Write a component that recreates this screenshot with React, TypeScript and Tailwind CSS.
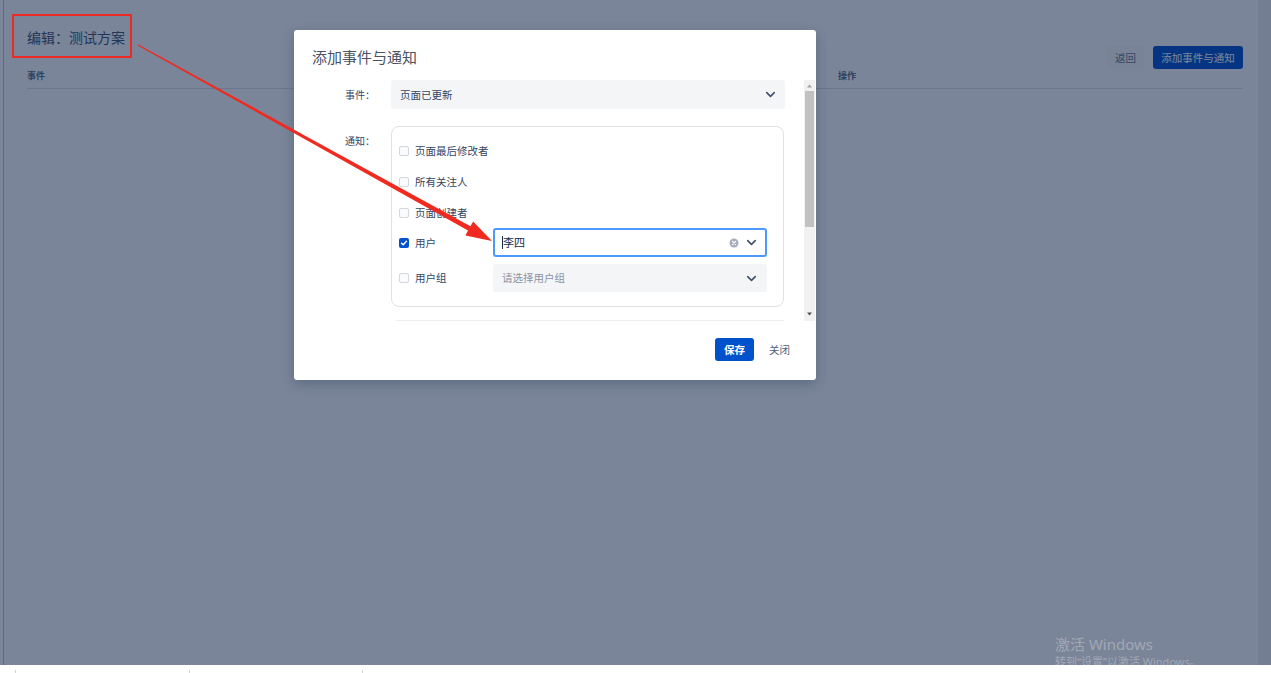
import { ChevronDown } from "lucide-react";

function Checkbox({ checked }: { checked?: boolean }) {
  if (checked) {
    return (
      <span className="flex h-[10px] w-[10px] items-center justify-center rounded-[2px] bg-[#0052cc]">
        <svg width="8" height="8" viewBox="0 0 8 8">
          <path d="M1.5 4.2 3.2 5.8 6.5 2.3" fill="none" stroke="white" strokeWidth="1.4" strokeLinecap="round" strokeLinejoin="round" />
        </svg>
      </span>
    );
  }
  return <span className="h-[10px] w-[10px] rounded-[2px] border border-[#d3d7de] bg-[#fafbfc]" />;
}

function NotifyOption({ label, checked, h }: { label: string; checked?: boolean; h: string }) {
  return (
    <div className={`flex items-center gap-[6px] ${h}`}>
      <Checkbox checked={checked} />
      <span className="text-[10.5px] text-[#344563]">{label}</span>
    </div>
  );
}

function Modal() {
  return (
    <div className="absolute left-[294px] top-[30px] flex h-[350px] w-[522px] flex-col rounded-[3px] bg-white shadow-[0_4px_12px_rgba(9,30,66,0.25)]">
      <div className="h-[50px] px-[18px] pt-[17px]">
        <h2 className="text-[15px] leading-[20px] text-[#4a5264]">添加事件与通知</h2>
      </div>

      <div className="flex h-[241px] overflow-hidden">
        <div className="flex flex-1 flex-col">
          <div className="flex h-[29px] items-center">
            <label className="w-[97px] pr-[16px] text-right text-[10px] text-[#344563]">事件：</label>
            <div className="flex h-[29px] w-[394px] items-center justify-between rounded-[3px] bg-[#f4f5f7] pl-[9px] pr-[7px]">
              <span className="text-[10.5px] text-[#344563]">页面已更新</span>
              <ChevronDown size={15} strokeWidth={2.6} className="text-[#42526e]" />
            </div>
          </div>

          <div className="mt-[17px] flex items-start">
            <label className="w-[97px] pr-[16px] pt-[8px] text-right text-[10px] leading-[14px] text-[#344563]">通知：</label>
            <div className="w-[393px] rounded-[8px] border border-[#dfe1e6] pb-[14px] pl-[7px] pr-[16px] pt-[8px]">
              <NotifyOption label="页面最后修改者" h="h-[31px]" />
              <NotifyOption label="所有关注人" h="h-[32px]" />
              <NotifyOption label="页面创建者" h="h-[30px]" />
              <div className="flex h-[29px] items-center">
                <div className="w-[94px]">
                  <NotifyOption label="用户" checked h="h-[29px]" />
                </div>
                <div className="flex h-[29px] flex-1 items-center justify-between rounded-[3px] border-2 border-[#4c9aff] pl-[7px] pr-[6px]">
                  <div className="flex items-center">
                    <span className="h-[13px] w-[1px] bg-[#172b4d]" />
                    <span className="text-[11px] text-[#172b4d]">李四</span>
                  </div>
                  <div className="flex items-center gap-[5px]">
                    <svg width="10" height="10" viewBox="0 0 10 10">
                      <circle cx="5" cy="5" r="4.5" fill="#a5adba" />
                      <path d="M3.4 3.4 6.6 6.6M6.6 3.4 3.4 6.6" stroke="white" strokeWidth="1.3" strokeLinecap="round" />
                    </svg>
                    <ChevronDown size={15} strokeWidth={2.6} className="text-[#42526e]" />
                  </div>
                </div>
              </div>
              <div className="mt-[7px] flex h-[28px] items-center">
                <div className="w-[94px]">
                  <NotifyOption label="用户组" h="h-[28px]" />
                </div>
                <div className="flex h-[28px] flex-1 items-center justify-between rounded-[3px] bg-[#f4f5f7] pl-[9px] pr-[8px]">
                  <span className="text-[10.5px] text-[#8993a4]">请选择用户组</span>
                  <ChevronDown size={15} strokeWidth={2.6} className="text-[#42526e]" />
                </div>
              </div>
            </div>
          </div>

          <div className="ml-[101px] mt-[13px] h-[20px] w-[390px] rounded-t-[8px] border border-[#ebecf0]" />
        </div>

        <div className="mr-[1px] flex w-[11px] flex-col items-center bg-[#f1f1f1]">
          <svg width="7" height="10" viewBox="0 0 7 10" className="mt-[1px]">
            <path d="M1 6.5 3.5 3.5 6 6.5Z" fill="#a3a3a3" />
          </svg>
          <div className="h-[136px] w-[9px] bg-[#c1c1c1]" />
          <div className="flex-1" />
          <svg width="7" height="10" viewBox="0 0 7 10" className="mb-[2px]">
            <path d="M1 3.5 3.5 6.5 6 3.5Z" fill="#505050" />
          </svg>
        </div>
      </div>

      <div className="flex flex-1 items-start justify-end gap-[7px] pr-[18px] pt-[17px]">
        <button className="h-[23px] w-[39px] rounded-[3px] bg-[#0052cc] text-[10.5px] font-bold text-white">保存</button>
        <button className="h-[23px] px-[8px] text-[10.5px] text-[#505f79]">关闭</button>
      </div>
    </div>
  );
}

export default function App() {
  return (
    <div className="relative h-[673px] w-[1271px] overflow-hidden bg-white font-['Noto_Sans_CJK_SC','Noto_Sans',sans-serif]">
      <div className="relative flex h-[665px] overflow-hidden">
        <div className="w-[3px]" />
        <div className="w-[1px] bg-[#c1c7d0]" />
        <main className="flex-1 pl-[23px] pr-[15px]">
          <div className="flex items-start justify-between pt-[26px]">
            <h1 className="text-[14px] leading-[22px] text-[#42526e]">编辑：测试方案</h1>
            <div className="mt-[20px] flex gap-[9px]">
              <button className="h-[23px] w-[37px] rounded-[3px] bg-[#fafbfc] text-[10.5px] text-[#6b778c]">返回</button>
              <button className="h-[23px] w-[90px] rounded-[3px] bg-[#0052cc] text-[10.5px] text-white">添加事件与通知</button>
            </div>
          </div>
          <div className="grid grid-cols-[811px_1fr] border-b border-[#dfe1e6] pb-[6px] pt-[1px] text-[9px] font-semibold leading-[12px] text-[#5e6c84]">
            <span>事件</span>
            <span>操作</span>
          </div>
        </main>
        <div className="w-[13px] bg-[#f0f0f0]" />

        <div className="absolute inset-0 bg-[rgba(9,30,66,0.54)]" />

        <Modal />

        <div className="absolute left-[1055px] top-[635px] font-['Noto_Sans','Noto_Sans_CJK_SC',sans-serif] text-white/30">
          <div className="text-[15px] leading-[19px]">激活 Windows</div>
          <div className="mt-[1px] text-[11px] leading-[14px]">转到“设置”以激活 Windows。</div>
        </div>
      </div>

      <div className="flex h-[8px] bg-white pl-[15px]">
        <div className="mt-[5px] h-[3px] w-[174px] border-l border-[#d0d3d8]" />
        <div className="mt-[5px] h-[3px] w-[173px] border-l border-[#d0d3d8]" />
        <div className="mt-[5px] h-[3px] w-[173px] border-l border-[#d0d3d8]" />
      </div>

      <div className="pointer-events-none absolute inset-0">
        <div className="absolute left-[12px] top-[14px] h-[44px] w-[120px] border-2 border-[#ee2a24]" />
        <svg className="absolute left-0 top-0" width="1271" height="673" viewBox="0 0 1271 673">
          <polygon
            points="138.34,44.39 470.46,226.21 473.1,221.4 492,241 465.4,235.4 468.04,230.59 137.66,45.61"
            fill="#f02a20"
          />
        </svg>
      </div>
    </div>
  );
}
